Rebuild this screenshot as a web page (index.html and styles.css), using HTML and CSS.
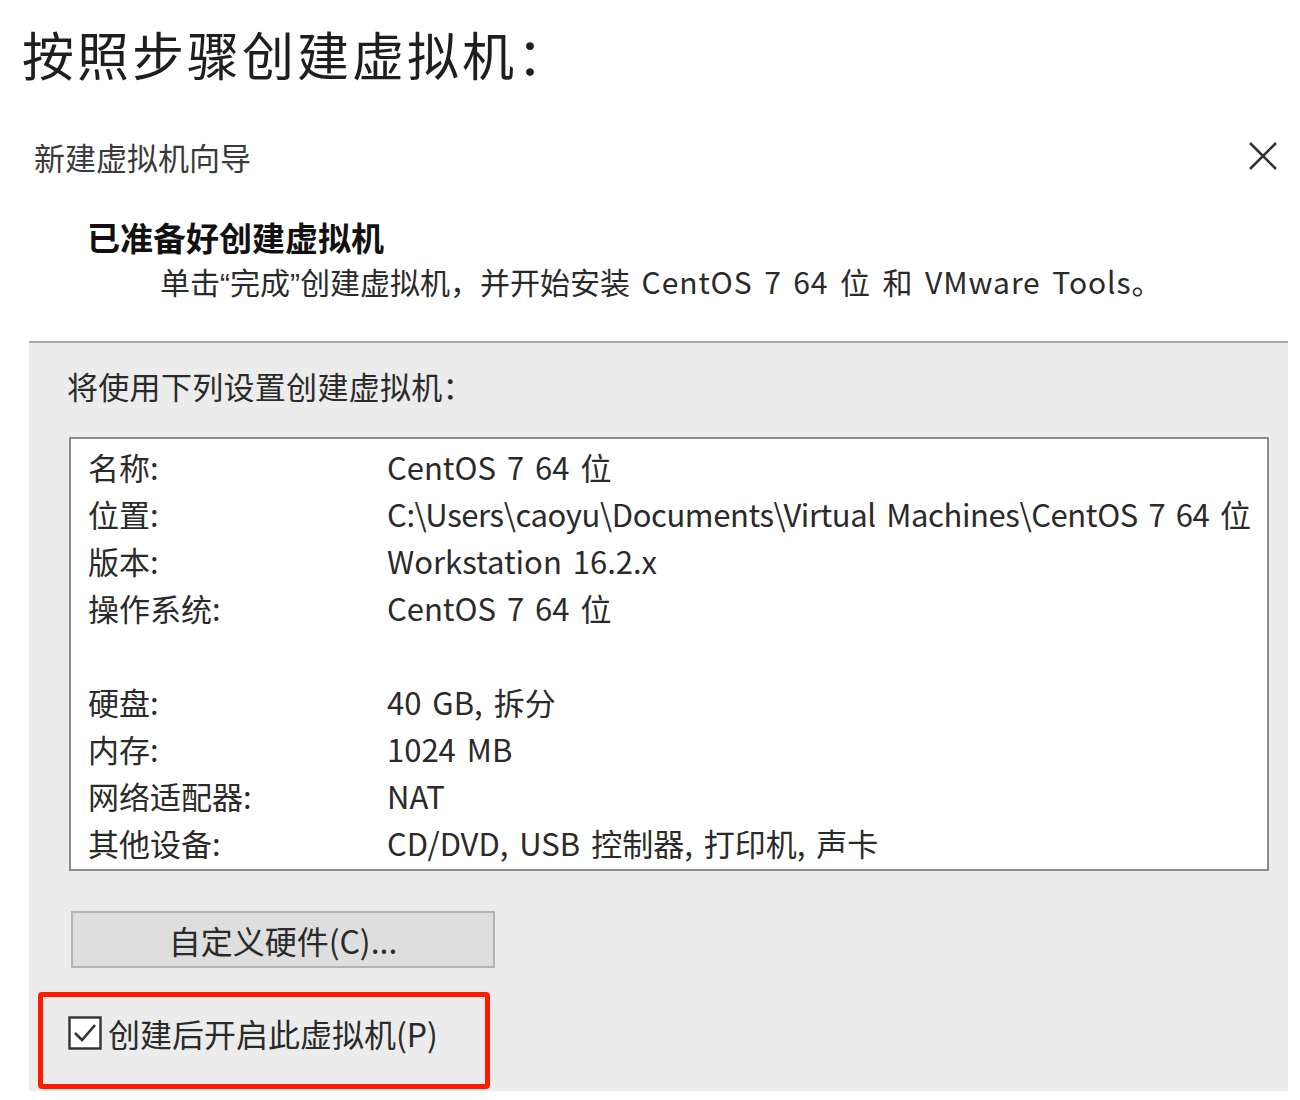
FILE: index.html
```html
<!DOCTYPE html>
<html lang="zh-CN">
<head>
<meta charset="utf-8">
<title>新建虚拟机向导</title>
<link rel="stylesheet" href="styles.css">
</head>
<body>
<h1 class="page-title">按照步骤创建虚拟机：</h1>
<div class="dialog">
  <div class="dialog-head">
    <span class="dialog-title">新建虚拟机向导</span>
    <svg class="close" viewBox="0 0 30 30" width="30" height="30"><path d="M2 2 L28 28 M28 2 L2 28" stroke="#333" stroke-width="2.6" fill="none"/></svg>
  </div>
  <div class="intro">
    <div class="intro-heading">已准备好创建虚拟机</div>
    <div class="intro-sub">单击<span class="q">“</span>完成<span class="q">”</span>创建虚拟机，并开始安装<span class="latin"> CentOS 7 64 位 和 VMware Tools</span>。</div>
  </div>
  <div class="panel">
    <div class="panel-label">将使用下列设置创建虚拟机：</div>
    <div class="summary">
      <div class="row"><span class="k">名称:</span><span class="v">CentOS 7 64 位</span></div>
      <div class="row"><span class="k">位置:</span><span class="v path">C:\Users\caoyu\Documents\Virtual Machines\CentOS 7 64 位</span></div>
      <div class="row"><span class="k">版本:</span><span class="v">Workstation 16.2.x</span></div>
      <div class="row"><span class="k">操作系统:</span><span class="v">CentOS 7 64 位</span></div>
      <div class="row"></div>
      <div class="row"><span class="k">硬盘:</span><span class="v">40 GB, 拆分</span></div>
      <div class="row"><span class="k">内存:</span><span class="v">1024 MB</span></div>
      <div class="row"><span class="k">网络适配器:</span><span class="v">NAT</span></div>
      <div class="row"><span class="k">其他设备:</span><span class="v">CD/DVD, USB 控制器, 打印机, 声卡</span></div>
    </div>
    <button class="hw-btn">自定义硬件(C)...</button>
    <div class="highlight">
      <label class="check">
        <svg class="box" viewBox="0 0 34 34" width="34" height="34"><rect x="1.5" y="1.5" width="31" height="31" fill="#fff" stroke="#333" stroke-width="2.4"/><path d="M7 17 L14 24 L27 9" stroke="#333" stroke-width="2.6" fill="none"/></svg>
        <span>创建后开启此虚拟机(P)</span>
      </label>
    </div>
  </div>
</div>
</body>
</html>
```
FILE: styles.css
```css
* { box-sizing: border-box; }
html, body { margin: 0; padding: 0; background: #fff; }
body {
  font-family: "Noto Sans CJK SC", "Noto Sans", sans-serif;
  color: #222;
  width: 1300px;
  height: 1100px;
  overflow: hidden;
}
.page-title {
  margin: 0;
  padding: 22px 0 0 22px;
  height: 87px;
  font-size: 52px;
  line-height: 64px;
  font-weight: 400;
  letter-spacing: 3px;
  color: #1e1e1e;
}
.dialog-head {
  margin-top: 50px;
  height: 40px;
  display: flex;
  align-items: center;
  justify-content: space-between;
  padding: 0 22px 0 34px;
}
.dialog-title {
  font-size: 31px;
  line-height: 40px;
  color: #3a3a3a;
}
.close { display: block; margin-top: -2px; }
.intro { margin-top: 38px; }
.intro-heading {
  padding-left: 87px;
  height: 44px;
  font-size: 33px;
  line-height: 44px;
  font-weight: 700;
  color: #111;
}
.intro-sub {
  padding-left: 160px;
  height: 44px;
  font-size: 30px;
  line-height: 44px;
  color: #2a2a2a;
  white-space: nowrap;
  overflow: hidden;
}
.intro-sub .q {
  font-family: "Liberation Sans", sans-serif;
  line-height: 1;
}
.intro-sub .latin {
  letter-spacing: 0.9px;
  word-spacing: 4px;
}
.panel {
  margin: 38px 12px 0 29px;
  border-top: 2px solid #a8a8a8;
  background: #ececec;
  padding: 23px 0 2px 0;
  height: 750px;
}
.panel-label {
  padding-left: 38px;
  height: 40px;
  font-size: 31px;
  line-height: 40px;
  letter-spacing: 0.3px;
  color: #2a2a2a;
}
.summary {
  margin: 31px 0 0 40px;
  width: 1200px;
  height: 434px;
  background: #fff;
  border: 2px solid #8a8a8a;
  padding: 4px 0 0 17px;
  overflow: hidden;
}
.row {
  height: 47px;
  display: flex;
  align-items: center;
  font-size: 31px;
  word-spacing: 4px;
  color: #2a2a2a;
  white-space: nowrap;
}
.row .k { width: 299px; flex: none; }
.row .path { letter-spacing: -0.4px; }
.hw-btn {
  display: block;
  margin: 40px 0 0 42px;
  width: 424px;
  height: 57px;
  background: #dedede;
  border: 2px solid #b4b4b4;
  font-family: inherit;
  font-size: 32px;
  color: #2a2a2a;
  padding: 0;
}
.highlight {
  margin: 24px 0 0 9px;
  width: 452px;
  height: 97px;
  border: 5px solid #ff1a00;
  border-radius: 4px;
  padding: 17px 0 0 25px;
}
.check {
  display: flex;
  align-items: center;
  gap: 6px;
  font-size: 32px;
  line-height: 38px;
  color: #2a2a2a;
}
.check .box { display: block; flex: none; }
```
